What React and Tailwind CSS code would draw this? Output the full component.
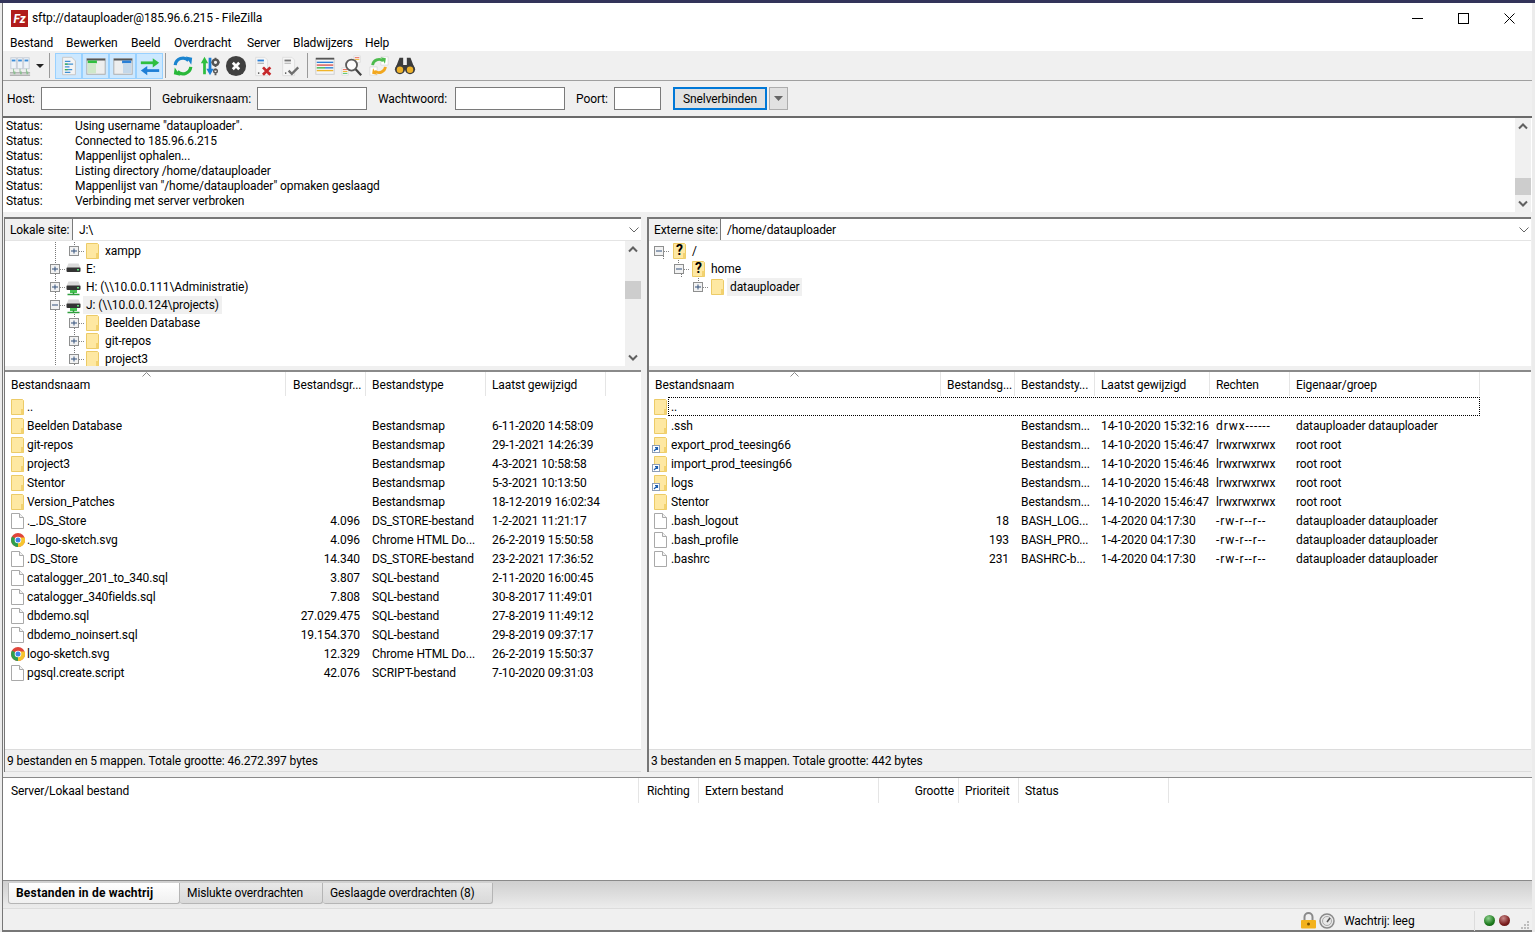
const localFiles = [
  ["..", "", "", "", "folder"],
  ["Beelden Database", "", "Bestandsmap", "6-11-2020 14:58:09", "folder"],
  ["git-repos", "", "Bestandsmap", "29-1-2021 14:26:39", "folder"],
  ["project3", "", "Bestandsmap", "4-3-2021 10:58:58", "folder"],
  ["Stentor", "", "Bestandsmap", "5-3-2021 10:13:50", "folder"],
  ["Version_Patches", "", "Bestandsmap", "18-12-2019 16:02:34", "folder"],
  ["._.DS_Store", "4.096", "DS_STORE-bestand", "1-2-2021 11:21:17", "file"],
  ["._logo-sketch.svg", "4.096", "Chrome HTML Do...", "26-2-2019 15:50:58", "chrome"],
  [".DS_Store", "14.340", "DS_STORE-bestand", "23-2-2021 17:36:52", "file"],
  ["catalogger_201_to_340.sql", "3.807", "SQL-bestand", "2-11-2020 16:00:45", "file"],
  ["catalogger_340fields.sql", "7.808", "SQL-bestand", "30-8-2017 11:49:01", "file"],
  ["dbdemo.sql", "27.029.475", "SQL-bestand", "27-8-2019 11:49:12", "file"],
  ["dbdemo_noinsert.sql", "19.154.370", "SQL-bestand", "29-8-2019 09:37:17", "file"],
  ["logo-sketch.svg", "12.329", "Chrome HTML Do...", "26-2-2019 15:50:37", "chrome"],
  ["pgsql.create.script", "42.076", "SCRIPT-bestand", "7-10-2020 09:31:03", "file"],
];

const remoteFiles = [
  ["..", "", "", "", "", "", "folder"],
  [".ssh", "", "Bestandsm...", "14-10-2020 15:32:16", "drwx------", "datauploader datauploader", "folder"],
  ["export_prod_teesing66", "", "Bestandsm...", "14-10-2020 15:46:47", "lrwxrwxrwx", "root root", "link"],
  ["import_prod_teesing66", "", "Bestandsm...", "14-10-2020 15:46:46", "lrwxrwxrwx", "root root", "link"],
  ["logs", "", "Bestandsm...", "14-10-2020 15:46:48", "lrwxrwxrwx", "root root", "link"],
  ["Stentor", "", "Bestandsm...", "14-10-2020 15:46:47", "lrwxrwxrwx", "root root", "folder"],
  [".bash_logout", "18", "BASH_LOG...", "1-4-2020 04:17:30", "-rw-r--r--", "datauploader datauploader", "file"],
  [".bash_profile", "193", "BASH_PRO...", "1-4-2020 04:17:30", "-rw-r--r--", "datauploader datauploader", "file"],
  [".bashrc", "231", "BASHRC-b...", "1-4-2020 04:17:30", "-rw-r--r--", "datauploader datauploader", "file"],
];

const logLines = [
  'Using username "datauploader".',
  "Connected to 185.96.6.215",
  "Mappenlijst ophalen...",
  "Listing directory /home/datauploader",
  'Mappenlijst van "/home/datauploader" opmaken geslaagd',
  "Verbinding met server verbroken",
];

function Folder() {
  return (
    <svg width="13" height="16" viewBox="0 0 13 16" className="shrink-0">
      <path d="M.5.5h11l1 1v14H.5z" fill="#fee8a2" stroke="#eccb67" />
      <path d="M10 10h2.500v5.500H10z" fill="#f3d270" />
    </svg>
  );
}

function LinkFolder() {
  return (
    <span className="relative block h-[16px] w-[13px] shrink-0">
      <Folder />
      <svg width="8" height="8" viewBox="0 0 8 8" className="absolute -left-[2px] bottom-0">
        <rect x=".5" y=".5" width="7" height="7" fill="#fff" stroke="#8d9db5" />
        <path d="M2 6l3-3M3 2.500h2.500V5" fill="none" stroke="#1d5fb0" strokeWidth="1.200" />
      </svg>
    </span>
  );
}

function FileIcon() {
  return (
    <svg width="13" height="16" viewBox="0 0 13 16" className="shrink-0">
      <path d="M.5.5h8l4 4v11H.5z" fill="#fff" stroke="#a9a9a9" />
      <path d="M8.500.5v4h4" fill="#f2f2f2" stroke="#a9a9a9" />
    </svg>
  );
}

function ChromeIcon() {
  return (
    <svg width="14" height="14" viewBox="0 0 14 14" className="shrink-0">
      <circle cx="7" cy="7" r="7" fill="#e0453a" />
      <path d="M7 7L1 3.500A7 7 0 0 0 7 14z" fill="#2f9f4d" />
      <path d="M7 7V14A7 7 0 0 0 13.600 4.500H7z" fill="#f6c52d" />
      <circle cx="7" cy="7" r="3.300" fill="#fff" />
      <circle cx="7" cy="7" r="2.500" fill="#3f83ea" />
    </svg>
  );
}

function FileGlyph({ kind }) {
  if (kind === "folder") return <span className="flex w-[14px] shrink-0"><Folder /></span>;
  if (kind === "link") return <span className="flex w-[14px] shrink-0"><LinkFolder /></span>;
  if (kind === "chrome") return <span className="flex w-[14px] shrink-0 justify-center"><ChromeIcon /></span>;
  return <span className="flex w-[14px] shrink-0 justify-start"><FileIcon /></span>;
}

function Expander({ x, open }) {
  return (
    <g>
      <rect x={x + 0.5} y="4.500" width="9" height="9" fill="#f2f2f2" stroke="#8e8f8f" />
      <path d={open ? `M${x + 2} 9h6` : `M${x + 2} 9h6M${x + 5} 6.500v5`} stroke="#33507a" strokeWidth="1" />
      <path d={`M${x + 10} 9.500h5`} stroke="#888" strokeDasharray="1 1" />
    </g>
  );
}

function Guide({ x, y1 = 0, y2 = 18 }) {
  return <path d={`M${x + 0.5} ${y1}V${y2}`} stroke="#777" strokeDasharray="1 1" />;
}

function TreeGuides({ width, children }) {
  return (
    <svg width={width} height="18" viewBox={`0 0 ${width} 18`} className="shrink-0">
      {children}
    </svg>
  );
}

function DriveIcon({ network }) {
  return (
    <svg width="15" height="17" viewBox="0 0 15 17" className="shrink-0">
      <path d="M2.500 2.500h10l2 4.500H.500z" fill="#dadada" />
      <rect x=".5" y="6.500" width="14" height="4.500" rx="1" fill="#333" />
      <rect x="11" y="8" width="2" height="1.500" fill="#5fe07a" />
      {network && (
        <>
          <path d="M4 11h7v3H4z" fill="#47c453" />
          <path d="M1.500 15.500h12" stroke="#2f9e3e" strokeWidth="1.500" />
          <path d="M7.500 13v3" stroke="#2f9e3e" strokeWidth="1.500" />
        </>
      )}
    </svg>
  );
}

function UnknownFolder() {
  return (
    <span className="relative flex h-[16px] w-[13px] shrink-0 justify-center">
      <span className="absolute inset-0"><Folder /></span>
      <span className="relative text-[14px] font-bold leading-[15px] text-black">?</span>
    </span>
  );
}

function TreeRow({ guides, guideWidth, icon, label, labelClass = "ml-[3px]", selected }) {
  return (
    <div className="flex h-[18px] items-center">
      <TreeGuides width={guideWidth}>{guides}</TreeGuides>
      {icon}
      <span className={`whitespace-nowrap px-[3px] leading-[18px] ${labelClass} ${selected ? "bg-[#f0f0f0]" : ""}`}>
        {label}
      </span>
    </div>
  );
}

function ChevronUp() {
  return (
    <svg width="10" height="7" viewBox="0 0 10 7">
      <path d="M1 5.500l4-4 4 4" fill="none" stroke="#606060" strokeWidth="2" />
    </svg>
  );
}

function ChevronDown() {
  return (
    <svg width="10" height="7" viewBox="0 0 10 7">
      <path d="M1 1.500l4 4 4-4" fill="none" stroke="#606060" strokeWidth="2" />
    </svg>
  );
}

function ScrollBar({ thumbClass }) {
  return (
    <div className="flex w-[16px] shrink-0 flex-col items-center bg-[#f0f0f0]">
      <div className="flex h-[17px] w-full shrink-0 items-center justify-center"><ChevronUp /></div>
      <div className="flex flex-1 flex-col justify-end">
        <div className={`w-[16px] bg-[#cdcdcd] ${thumbClass}`} />
      </div>
      <div className="flex h-[17px] w-full shrink-0 items-center justify-center"><ChevronDown /></div>
    </div>
  );
}

function SiteBar({ label, path, labelClass }) {
  return (
    <div className="flex h-[22px] shrink-0 border-b border-[#e4e4e4] bg-white">
      <div className={`flex items-center whitespace-nowrap border-r border-[#7a7a7a] bg-[#f0f0f0] pl-[5px] pt-[2px] ${labelClass}`}>{label}</div>
      <div className="flex flex-1 items-center pl-[6px] pt-[2px]">{path}</div>
      <svg width="10" height="6" viewBox="0 0 10 6" className="mr-[2px] mt-[8px]">
        <path d="M.5.5L5 5 9.500.5" fill="none" stroke="#666" />
      </svg>
    </div>
  );
}

function HeaderCell({ children, className = "" }) {
  return <div className={`flex h-[24px] items-center border-r border-[#e5e5e5] px-[6px] pt-[2px] whitespace-nowrap ${className}`}>{children}</div>;
}

function SortArrow({ className }) {
  return (
    <svg width="9" height="5" viewBox="0 0 9 5" className={`absolute top-0 ${className}`}>
      <path d="M.5 4.500l4-4 4 4" fill="none" stroke="#8a8a8a" />
    </svg>
  );
}

function Sep({ className = "mx-[3px]" }) {
  return <div className={`h-[25px] w-px bg-[#9a9a9a] ${className}`} />;
}

function ToolIcon({ children, active, className = "" }) {
  return (
    <div className={`flex h-[26px] w-[27px] items-center justify-center ${active ? "border border-[#99d1ff] bg-[#cce8ff]" : ""} ${className}`}>
      <svg width="22" height="22" viewBox="0 0 24 24">{children}</svg>
    </div>
  );
}

function Toolbar() {
  return (
    <div className="flex h-[29px] shrink-0 items-center bg-[#f0f0f0] pl-[3px]">
      <ToolIcon className="w-[24px]">
        {[2, 9, 16].map((x) => (
          <g key={x}>
            <rect x={x} y="3" width="6" height="12" fill="#eef3f8" stroke="#c4ccd6" />
            <rect x={x + 1} y="5" width="4" height="2" fill="#3c8ed8" />
            <path d={`M${x + 3} 15v4`} stroke="#8bbf90" />
          </g>
        ))}
        <path d="M1 19.500h22M1 22h22" stroke="#8a8a8a" />
        <path d="M5 18h2v3H5zM12 18h2v3h-2zM19 18h2v3h-2z" fill="#8bbf90" />
      </ToolIcon>
      <svg width="8" height="4" viewBox="0 0 8 4" className="ml-[3px] mr-[2px]"><path d="M0 0h8L4 4z" fill="#222" /></svg>
      <Sep className="ml-[3px] mr-[1px]" />
      <div className="ml-[4px] flex">
        <ToolIcon active>
          <path d="M5 2.500h10l4 4v15H5z" fill="#f4f4f4" stroke="#c4c4c4" />
          <path d="M7.500 7h6M7.500 10h9M7.500 13h5M7.500 16h8M7.500 19h6" stroke="#3f8fd2" strokeWidth="1.500" />
          <path d="M7.500 10h3M7.500 16h3" stroke="#39b44a" strokeWidth="1.500" />
        </ToolIcon>
        <ToolIcon active>
          <rect x="2" y="4" width="20" height="17" fill="#eee" stroke="#aaa" />
          <rect x="2" y="4" width="20" height="2" fill="#555" />
          <rect x="3" y="6" width="10" height="3" fill="#2fbf3f" />
          <rect x="3" y="9" width="9" height="11" fill="#cfe8c9" />
        </ToolIcon>
        <ToolIcon active>
          <rect x="2" y="4" width="20" height="17" fill="#eee" stroke="#aaa" />
          <rect x="2" y="4" width="20" height="2" fill="#555" />
          <rect x="11" y="6" width="10" height="3" fill="#2a7fd6" />
          <rect x="12" y="9" width="9" height="11" fill="#c4d8ea" />
        </ToolIcon>
        <ToolIcon active>
          <path d="M2 8.500h15" stroke="#2fbf3f" strokeWidth="3" />
          <path d="M15 3.500l7 5-7 5z" fill="#2fbf3f" />
          <path d="M22 17h-15" stroke="#1f7fd6" strokeWidth="3" />
          <path d="M9 12l-7 5 7 5z" fill="#1f7fd6" />
        </ToolIcon>
      </div>
      <Sep className="ml-[2px] mr-[3px]" />
      <ToolIcon>
        <path d="M3.500 11A8.500 8.500 0 0 1 18 6" fill="none" stroke="#1b84cf" strokeWidth="3.500" />
        <path d="M15 1.500L22 3l-1 7.500z" fill="#1b84cf" />
        <path d="M20.500 13A8.500 8.500 0 0 1 6 18" fill="none" stroke="#29b83a" strokeWidth="3.500" />
        <path d="M9 22.500L2 21l1-7.500z" fill="#29b83a" />
      </ToolIcon>
      <ToolIcon>
        <path d="M6 8v13" stroke="#2fbf3f" strokeWidth="3" />
        <path d="M2 9l4-7 4 7z" fill="#2fbf3f" />
        <path d="M12 3v13" stroke="#1f7fd6" strokeWidth="3" />
        <path d="M8 15l4 7 4-7z" fill="#1f7fd6" />
        <circle cx="18" cy="8" r="3" fill="none" stroke="#555" strokeWidth="2.500" />
        <path d="M18 3v2M18 11v2M13.500 8h2M20.500 8h2M18 15v2M18 20v2" stroke="#555" strokeWidth="2" />
        <circle cx="18" cy="17.500" r="2" fill="none" stroke="#555" strokeWidth="1.500" />
      </ToolIcon>
      <ToolIcon className="ml-[-1px]">
        <circle cx="12" cy="12" r="11" fill="#404040" />
        <path d="M8.500 8.500l7 7M15.500 8.500l-7 7" stroke="#fff" strokeWidth="3" />
      </ToolIcon>
      <ToolIcon>
        <path d="M4 2.500h10l3 3v17H4z" fill="#f6f6f6" stroke="#ddd" />
        <path d="M6 6h7" stroke="#2a7fd6" strokeWidth="2" />
        <path d="M6 9h7" stroke="#999" />
        <rect x="6.500" y="19" width="1.500" height="1.500" fill="#444" />
        <path d="M12 13.500l8 8M20 13.500l-8 8" stroke="#c6282b" strokeWidth="3" />
      </ToolIcon>
      <ToolIcon>
        <path d="M4 2.500h10l3 3v17H4z" fill="#f6f6f6" stroke="#ddd" />
        <path d="M6 6h7" stroke="#777" strokeWidth="2" />
        <path d="M6 9h7" stroke="#aaa" />
        <rect x="6.500" y="19" width="1.500" height="1.500" fill="#444" />
        <path d="M10.500 17l3.500 3.500 7-7" fill="none" stroke="#6f6f6f" strokeWidth="2.500" />
      </ToolIcon>
      <Sep className="ml-[4px] mr-[3px]" />
      <ToolIcon>
        <rect x="2" y="4" width="20" height="17" fill="#f6f6f6" stroke="#ccc" />
        <rect x="2" y="3" width="20" height="2" fill="#555" />
        <path d="M3 8h18" stroke="#2a7fd6" strokeWidth="1.500" />
        <path d="M3 11h18" stroke="#d9534f" strokeWidth="1.500" />
        <path d="M3 14h9" stroke="#39b44a" strokeWidth="1.500" />
        <path d="M12 14h9" stroke="#2a7fd6" strokeWidth="1.500" />
        <path d="M3 17h18" stroke="#f0b429" strokeWidth="1.500" />
      </ToolIcon>
      <ToolIcon>
        <path d="M14 1h7v7h-7z" fill="#fff" stroke="#ddd" />
        <path d="M15 3h5" stroke="#e04b3a" />
        <path d="M15 5h5" stroke="#f0b429" />
        <path d="M1 14h7v8H1z" fill="#fff" stroke="#ddd" />
        <path d="M2 16h5" stroke="#e04b3a" />
        <path d="M2 18h5" stroke="#f0b429" />
        <path d="M2 20h5" stroke="#39b44a" />
        <circle cx="11.500" cy="11" r="6" fill="#ffffffcc" stroke="#5b5b5b" strokeWidth="2" />
        <path d="M16 15.500l6 6.500" stroke="#444" strokeWidth="2.500" />
      </ToolIcon>
      <ToolIcon>
        <path d="M14 2h8v9h-8zM2 13h8v9H2z" fill="#fff" stroke="#ddd" />
        <path d="M5 11a7 7 0 0 1 11.500-4.500" fill="none" stroke="#4dbb4d" strokeWidth="3" />
        <path d="M14 2.500l5.500 1-1 6z" fill="#4dbb4d" />
        <path d="M19 13a7 7 0 0 1-11.500 4.500" fill="none" stroke="#f2a71e" strokeWidth="3" />
        <path d="M10 21.500l-5.500-1 1-6z" fill="#f2a71e" />
      </ToolIcon>
      <ToolIcon className="ml-[-1px]">
        <path d="M6 3h4v8h4V3h4l5 13H1z" fill="#3d3d3d" />
        <circle cx="6.500" cy="15.500" r="5.500" fill="#3d3d3d" />
        <circle cx="17.500" cy="15.500" r="5.500" fill="#3d3d3d" />
        <circle cx="6.500" cy="16" r="3.500" fill="#eeb22a" />
        <circle cx="17.500" cy="16" r="3.500" fill="#eeb22a" />
      </ToolIcon>
    </div>
  );
}

function QuickInput({ className }) {
  return <div className={`h-[23px] border border-[#7a7a7a] bg-white ${className}`} />;
}

function QuickConnect() {
  return (
    <div className="flex h-[35px] shrink-0 items-center bg-[#f0f0f0] pl-[4px]">
      <span className="w-[34px] pt-[2px]">Host:</span>
      <QuickInput className="w-[110px]" />
      <span className="ml-[11px] w-[95px] pt-[2px]">Gebruikersnaam:</span>
      <QuickInput className="w-[110px]" />
      <span className="ml-[11px] w-[77px] pt-[2px]">Wachtwoord:</span>
      <QuickInput className="w-[110px]" />
      <span className="ml-[11px] w-[38px] pt-[2px]">Poort:</span>
      <QuickInput className="w-[47px]" />
      <div className="ml-[12px] flex h-[23px] w-[94px] items-center justify-center border-2 border-[#0078d7] bg-[#e1e1e1] pt-[2px]">Snelverbinden</div>
      <div className="ml-[2px] flex h-[23px] w-[19px] items-center justify-center border border-[#adadad] bg-[#e1e1e1]">
        <svg width="9" height="5" viewBox="0 0 9 5"><path d="M0 0h9L4.500 5z" fill="#666" /></svg>
      </div>
    </div>
  );
}

function LocalTree() {
  return (
    <div className="flex h-[125px] shrink-0 bg-white">
      <div className="h-full flex-1 overflow-hidden pt-px">
        <TreeRow guideWidth={81} guides={<><Guide x={50} /><Guide x={69} y1="0" y2="4" /><Expander x={64} /></>} icon={<Folder />} label="xampp" />
        <TreeRow guideWidth={61} guides={<><Guide x={50} /><Expander x={45} /></>} icon={<DriveIcon />} label="E:" labelClass="ml-[2px]" />
        <TreeRow guideWidth={61} guides={<><Guide x={50} /><Expander x={45} /></>} icon={<DriveIcon network />} label="H: (\\10.0.0.111\Administratie)" labelClass="ml-[2px]" />
        <TreeRow guideWidth={61} guides={<><Guide x={50} /><Expander x={45} open /></>} icon={<DriveIcon network />} label="J: (\\10.0.0.124\projects)" labelClass="ml-[2px]" selected />
        {["Beelden Database", "git-repos", "project3"].map((name) => (
          <TreeRow key={name} guideWidth={81} guides={<><Guide x={50} /><Guide x={69} /><Expander x={64} /></>} icon={<Folder />} label={name} />
        ))}
      </div>
      <ScrollBar thumbClass="mb-[50px] h-[18px]" />
    </div>
  );
}

function RemoteTree() {
  return (
    <div className="h-[125px] shrink-0 bg-white pt-px">
      <TreeRow guideWidth={24} guides={<><Guide x={14} y1="14" y2="18" /><Expander x={5} open /></>} icon={<UnknownFolder />} label="/" />
      <TreeRow guideWidth={43} guides={<><Guide x={32} y1="14" y2="18" /><Guide x={29} y1="0" y2="4" /><Expander x={25} open /></>} icon={<UnknownFolder />} label="home" />
      <TreeRow guideWidth={62} guides={<><Guide x={49} y1="0" y2="4" /><Expander x={44} /></>} icon={<Folder />} label="datauploader" selected />
    </div>
  );
}

function LocalList() {
  return (
    <div className="relative flex min-h-0 flex-1 flex-col bg-white">
      <SortArrow className="left-[137px]" />
      <div className="grid shrink-0 grid-cols-[281px_80px_120px_120px]">
        <HeaderCell>Bestandsnaam</HeaderCell>
        <HeaderCell className="overflow-hidden pl-[7px]">Bestandsgr...</HeaderCell>
        <HeaderCell>Bestandstype</HeaderCell>
        <HeaderCell>Laatst gewijzigd</HeaderCell>
      </div>
      <div className="flex-1 pt-px">
        {localFiles.map(([name, size, type, date, kind]) => (
          <div key={name} className="grid h-[19px] grid-cols-[281px_80px_120px_120px] items-center">
            <div className="flex items-center pl-[6px]">
              <FileGlyph kind={kind} />
              <span className="ml-[2px] whitespace-nowrap pt-[2px]">{name}</span>
            </div>
            <div className="pr-[6px] pt-[2px] text-right">{size}</div>
            <div className="whitespace-nowrap pl-[6px] pt-[2px]">{type}</div>
            <div className="whitespace-nowrap pl-[6px] pt-[2px]">{date}</div>
          </div>
        ))}
      </div>
    </div>
  );
}

function RemoteList() {
  return (
    <div className="relative flex min-h-0 flex-1 flex-col bg-white">
      <SortArrow className="left-[141px]" />
      <div className="grid shrink-0 grid-cols-[292px_74px_80px_115px_80px_190px]">
        <HeaderCell>Bestandsnaam</HeaderCell>
        <HeaderCell className="overflow-hidden">Bestandsg...</HeaderCell>
        <HeaderCell className="overflow-hidden">Bestandsty...</HeaderCell>
        <HeaderCell>Laatst gewijzigd</HeaderCell>
        <HeaderCell>Rechten</HeaderCell>
        <HeaderCell>Eigenaar/groep</HeaderCell>
      </div>
      <div className="flex-1 pt-px">
        {remoteFiles.map(([name, size, type, date, rights, owner, kind], i) => (
          <div key={name} className="relative grid h-[19px] grid-cols-[292px_74px_80px_115px_80px_190px] items-center">
            {i === 0 && <div className="absolute bottom-0 left-[19px] right-[51px] top-0 border border-dotted border-black" />}
            <div className="flex items-center pl-[5px]">
              <FileGlyph kind={kind} />
              <span className="ml-[3px] whitespace-nowrap pt-[2px]">{name}</span>
            </div>
            <div className="pr-[6px] pt-[2px] text-right">{size}</div>
            <div className="whitespace-nowrap pl-[6px] pt-[2px]">{type}</div>
            <div className="whitespace-nowrap pl-[6px] pt-[2px]">{date}</div>
            <div className={`whitespace-nowrap pl-[6px] pt-[2px] ${rights.includes("-") ? "tracking-[0.9px]" : ""}`}>{rights}</div>
            <div className="whitespace-nowrap pl-[6px] pt-[2px]">{owner}</div>
          </div>
        ))}
      </div>
    </div>
  );
}

function Queue() {
  return (
    <div className="flex h-[104px] shrink-0 flex-col border-y border-[#8a8a8a] bg-white">
      <div className="grid grid-cols-[636px_60px_180px_80px_60px_150px]">
        <div className="flex h-[25px] items-center border-r border-[#e5e5e5] pl-[8px] pt-[2px]">Server/Lokaal bestand</div>
        <div className="flex h-[25px] items-center border-r border-[#e5e5e5] pl-[8px] pt-[2px]">Richting</div>
        <div className="flex h-[25px] items-center border-r border-[#e5e5e5] pl-[6px] pt-[2px]">Extern bestand</div>
        <div className="flex h-[25px] items-center justify-end border-r border-[#e5e5e5] pr-[4px] pt-[2px]">Grootte</div>
        <div className="flex h-[25px] items-center border-r border-[#e5e5e5] pl-[6px] pt-[2px]">Prioriteit</div>
        <div className="flex h-[25px] items-center border-r border-[#e5e5e5] pl-[6px] pt-[2px]">Status</div>
      </div>
    </div>
  );
}

function Tabs() {
  return (
    <div className="flex h-[27px] shrink-0 items-start bg-gradient-to-b from-[#cfcfcf] to-[#ececec] pl-[5px] pt-[2px]">
      <div className="flex h-[21px] w-[172px] items-center rounded-b-[3px] border border-t-0 border-[#b5b5b5] bg-gradient-to-b from-white to-[#f0f0f0] pl-[7px] pt-px font-bold tracking-[0.2px]">
        Bestanden in de wachtrij
      </div>
      <div className="flex h-[21px] w-[143px] items-center rounded-b-[3px] border border-l-0 border-t-0 border-[#b5b5b5] bg-gradient-to-b from-[#e8e8e8] to-[#d9d9d9] pl-[7px] pt-px">
        Mislukte overdrachten
      </div>
      <div className="flex h-[21px] w-[170px] items-center rounded-b-[3px] border border-l-0 border-t-0 border-[#b5b5b5] bg-gradient-to-b from-[#e8e8e8] to-[#d9d9d9] pl-[7px] pt-px">
        Geslaagde overdrachten (8)
      </div>
    </div>
  );
}

function StatusBar() {
  return (
    <div className="flex h-[24px] shrink-0 items-center justify-end border-b-2 border-t border-b-[#777] border-t-[#dcdcdc] bg-[#f0f0f0] pt-[2px]">
      <svg width="17" height="17" viewBox="0 0 17 17">
        <path d="M4.500 8V5a4 4 0 0 1 8 0v3" fill="none" stroke="#8a8a8a" strokeWidth="2" />
        <rect x="1" y="8" width="15" height="8.500" rx="1" fill="#f3b21d" />
        <circle cx="8.500" cy="12" r="1.500" fill="#7a5200" />
      </svg>
      <svg width="16" height="16" viewBox="0 0 16 16" className="ml-[2px]">
        <circle cx="8" cy="8" r="7" fill="#e8e8e8" stroke="#8a8a8a" strokeWidth="1.500" />
        <circle cx="8" cy="8" r="4.500" fill="none" stroke="#aaa" />
        <path d="M8 9l3-4" stroke="#555" strokeWidth="1.500" />
      </svg>
      <span className="ml-[9px] w-[130px] pt-[2px]">Wachtrij: leeg</span>
      <div className="h-[20px] w-px bg-[#dcdcdc]" />
      <div className="ml-[9px] h-[11px] w-[11px] rounded-full bg-[radial-gradient(circle_at_40%_30%,#8fd08f,#1d7a1d_60%,#0f4f0f)]" />
      <div className="ml-[4px] h-[11px] w-[11px] rounded-full bg-[radial-gradient(circle_at_40%_30%,#c98a8a,#7a1d1d_60%,#4f0f0f)]" />
      <svg width="10" height="10" viewBox="0 0 10 10" className="ml-[10px] mr-[2px] mt-[8px]">
        <path d="M7 1h2v2H7zM4 4h2v2H4zM7 4h2v2H7zM1 7h2v2H1zM4 7h2v2H4zM7 7h2v2H7z" fill="#bdbdbd" />
      </svg>
    </div>
  );
}

export default function App() {
  return (
    <div className="flex h-[932px] w-[1535px] flex-col overflow-hidden bg-[#ececec] text-[12px] leading-[15px] tracking-[-0.1px] text-black [font-family:'Roboto',sans-serif]">
      <div className="h-[3px] shrink-0 bg-[#33345a]" />
      <div className="ml-[2px] flex min-h-0 w-[1530px] flex-1 flex-col border-l border-[#777] bg-[#f0f0f0]">
        {/* title + menu */}
        <div className="flex h-[31px] shrink-0 items-center bg-white pl-[8px]">
          <div className="flex h-[17px] w-[17px] items-center justify-center bg-[#b01c1c] text-[12px] font-bold italic leading-none text-white">Fz</div>
          <span className="ml-[4px]">sftp://datauploader@185.96.6.215 - FileZilla</span>
          <div className="ml-auto flex items-center">
            <svg width="11" height="11" viewBox="0 0 11 11" className="mr-[35px]"><path d="M0 5.500h11" stroke="#000" /></svg>
            <svg width="11" height="11" viewBox="0 0 11 11" className="mr-[35px]"><rect x=".5" y=".5" width="10" height="10" fill="none" stroke="#000" /></svg>
            <svg width="11" height="11" viewBox="0 0 11 11" className="mr-[17px]"><path d="M.5.5l10 10M10.500.5l-10 10" stroke="#000" /></svg>
          </div>
        </div>
        <div className="flex h-[17px] shrink-0 items-center bg-white pl-[7px] pt-[2px]">
          <span className="w-[56px]">Bestand</span>
          <span className="w-[65px]">Bewerken</span>
          <span className="w-[43px]">Beeld</span>
          <span className="w-[73px]">Overdracht</span>
          <span className="w-[46px]">Server</span>
          <span className="w-[72px]">Bladwijzers</span>
          <span>Help</span>
        </div>
        <Toolbar />
        <div className="h-px shrink-0 bg-[#a0a0a0]" />
        <QuickConnect />
        <div className="h-[2px] shrink-0 bg-[#6a6a6a]" />

        {/* message log */}
        <div className="flex h-[94px] shrink-0 bg-white">
          <div className="flex-1 pl-[3px] pt-px">
            {logLines.map((line) => (
              <div key={line} className="flex h-[15px] items-center whitespace-nowrap">
                <span className="w-[69px]">Status:</span>
                <span>{line}</span>
              </div>
            ))}
          </div>
          <ScrollBar thumbClass="mb-[0px] h-[17px]" />
          <div className="w-px bg-white" />
        </div>
        <div className="h-[5px] shrink-0" />

        {/* panes */}
        <div className="flex h-[555px] shrink-0 gap-[6px]">
          <div className="ml-px flex w-[637px] flex-col border-l border-t-2 border-[#777]">
            <SiteBar label="Lokale site:" path="J:\" labelClass="w-[68px]" />
            <LocalTree />
            <div className="h-[4px] shrink-0 bg-[#f0f0f0]" />
            <div className="h-[2px] shrink-0 bg-[#8a8a8a]" />
            <LocalList />
            <div className="flex h-[23px] shrink-0 items-center border-y border-[#dcdcdc] bg-[#f0f0f0] pl-[2px] pt-[2px]">9 bestanden en 5 mappen. Totale grootte: 46.272.397 bytes</div>
          </div>
          <div className="flex w-[884px] flex-col border-l-2 border-t-2 border-[#777]">
            <SiteBar label="Externe site:" path="/home/datauploader" labelClass="w-[72px]" />
            <RemoteTree />
            <div className="h-[4px] shrink-0 bg-[#f0f0f0]" />
            <div className="h-[2px] shrink-0 bg-[#8a8a8a]" />
            <RemoteList />
            <div className="flex h-[23px] shrink-0 items-center border-y border-[#dcdcdc] bg-[#f0f0f0] pl-[2px] pt-[2px]">3 bestanden en 5 mappen. Totale grootte: 442 bytes</div>
          </div>
        </div>
        <div className="h-[5px] shrink-0" />
        <Queue />
        <Tabs />
        <StatusBar />
      </div>
    </div>
  );
}
